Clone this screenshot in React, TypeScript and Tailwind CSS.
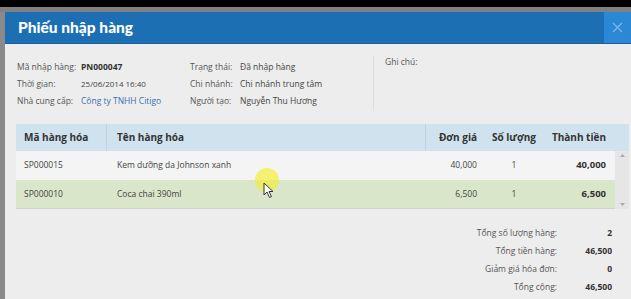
import React from "react";

const F = { fontFamily: '"Open Sans", "Noto Sans", sans-serif' };
const T = { fontFamily: 'Lato, "Open Sans", sans-serif' };

export default function App() {
  return (
    <div className="w-[631px] h-[299px] bg-[#7d7d7d] relative overflow-hidden flex flex-col" style={F}>
      <div className="h-[7px] bg-black shrink-0" />
      <div className="h-[5px] bg-[#808080] shrink-0" />
      <div className="flex flex-1 min-h-0">
        <div className="w-[5px] bg-[#8a8a8a] shrink-0" />
        <div className="flex-1 flex flex-col bg-[#ededed]">
          {/* header */}
          <div className="h-[32px] bg-[#1d6fb4] flex items-stretch shrink-0 border-b border-[#1a5f9c]">
            <div className="flex-1 pl-[13px] flex items-center text-white font-black text-[15.5px]" style={T}>
              Phiếu nhập hàng
            </div>
            <div className="w-[27px] bg-[#2a88d4] flex items-center justify-center">
              <svg width="11" height="11" viewBox="0 0 11 11">
                <path d="M1 1L10 10M10 1L1 10" stroke="#7fb8e6" strokeWidth="1.2" />
              </svg>
            </div>
          </div>
          {/* info */}
          <div className="flex pt-[14px] pl-[12px] text-[8.5px] text-[#555] leading-[17px]">
            <div className="w-[173px]">
              <div className="flex"><span className="w-[64px]">Mã nhập hàng:</span><span className="font-bold text-[#333]">PN000047</span></div>
              <div className="flex"><span className="w-[64px]">Thời gian:</span><span className="text-[#444] text-[8px]">25/06/2014 16:40</span></div>
              <div className="flex"><span className="w-[64px]">Nhà cung cấp:</span><span className="text-[#3a6fb2]">Công ty TNHH Citigo</span></div>
            </div>
            <div className="w-[183px]">
              <div className="flex"><span className="w-[50px]">Trạng thái:</span><span className="text-[#444]">Đã nhập hàng</span></div>
              <div className="flex"><span className="w-[50px]">Chi nhánh:</span><span className="text-[#444]">Chi nhánh trung tâm</span></div>
              <div className="flex"><span className="w-[50px]">Người tạo:</span><span className="text-[#444]">Nguyễn Thu Hương</span></div>
            </div>
            <div className="w-px bg-[#dcdcdc] mt-[-2px] h-[55px]" />
            <div className="pl-[11px] -mt-[5px]">Ghi chú:</div>
          </div>
          {/* table */}
          <div className="ml-[11px] mr-[2px] mt-[13px] flex flex-col">
            <div className="h-[27px] bg-[#cfe2ed] flex items-center text-[10px] font-bold text-[#333]">
              <div className="w-[91px] pl-[8px] h-full flex items-center border-r border-[#bcd3e2]">Mã hàng hóa</div>
              <div className="w-[318px] pl-[10px]">Tên hàng hóa</div>
              <div className="w-[60px] h-full flex items-center justify-end pr-[8px] border-l border-[#bcd3e2]">Đơn giá</div>
              <div className="w-[58px] text-center">Số lượng</div>
              <div className="w-[67px] text-right pr-[4px]">Thành tiền</div>
              <div className="flex-1" />
            </div>
            <div className="flex">
              <div className="flex-1 flex flex-col text-[8.5px] text-[#444]">
                <div className="h-[29px] bg-[#f4f4f4] flex items-center">
                  <div className="w-[91px] pl-[8px]">SP000015</div>
                  <div className="w-[318px] pl-[10px]">Kem dưỡng da Johnson xanh</div>
                  <div className="w-[60px] text-right pr-[8px]">40,000</div>
                  <div className="w-[58px] text-center">1</div>
                  <div className="w-[67px] text-right pr-[4px] font-bold text-[9.5px] text-[#333]">40,000</div>
                </div>
                <div className="h-[29px] bg-[#d9e6c9] flex items-center border-b border-[#d0d0d0]">
                  <div className="w-[91px] pl-[8px]">SP000010</div>
                  <div className="w-[318px] pl-[10px]">Coca chai 390ml</div>
                  <div className="w-[60px] text-right pr-[8px]">6,500</div>
                  <div className="w-[58px] text-center">1</div>
                  <div className="w-[67px] text-right pr-[4px] font-bold text-[9.5px] text-[#333]">6,500</div>
                </div>
              </div>
              <div className="w-[14px] bg-[#e6e6e6] flex flex-col items-center justify-between py-[3px]">
                <svg width="5" height="3" viewBox="0 0 5 3"><path d="M0 3L2.5 0L5 3Z" fill="#aaa" /></svg>
                <svg width="5" height="3" viewBox="0 0 5 3"><path d="M0 0L2.5 3L5 0Z" fill="#aaa" /></svg>
              </div>
            </div>
          </div>
          {/* summary */}
          <div className="mt-[15px] flex flex-col items-end pr-[19px] text-[8.5px] text-[#555] leading-[18px]">
            {[
              ["Tổng số lượng hàng:", "2"],
              ["Tổng tiền hàng:", "46,500"],
              ["Giảm giá hóa đơn:", "0"],
              ["Tổng cộng:", "46,500"],
            ].map(([l, v]) => (
              <div key={l} className="flex">
                <span className="text-right">{l}</span>
                <span className="w-[55px] text-right font-bold text-[#333]">{v}</span>
              </div>
            ))}
          </div>
        </div>
      </div>
      {/* cursor highlight */}
      <div className="absolute left-[255px] top-[168px] w-[24px] h-[24px] rounded-full bg-[#f2ee3a]/70" />
      <svg className="absolute left-[263px] top-[182px]" width="12" height="17" viewBox="0 0 12 17">
        <path d="M1 1L1 13L4 10L6.5 15.5L8.5 14.5L6 9.5L10 9.5Z" fill="white" stroke="#333" strokeWidth="1" strokeLinejoin="round" />
      </svg>
    </div>
  );
}
